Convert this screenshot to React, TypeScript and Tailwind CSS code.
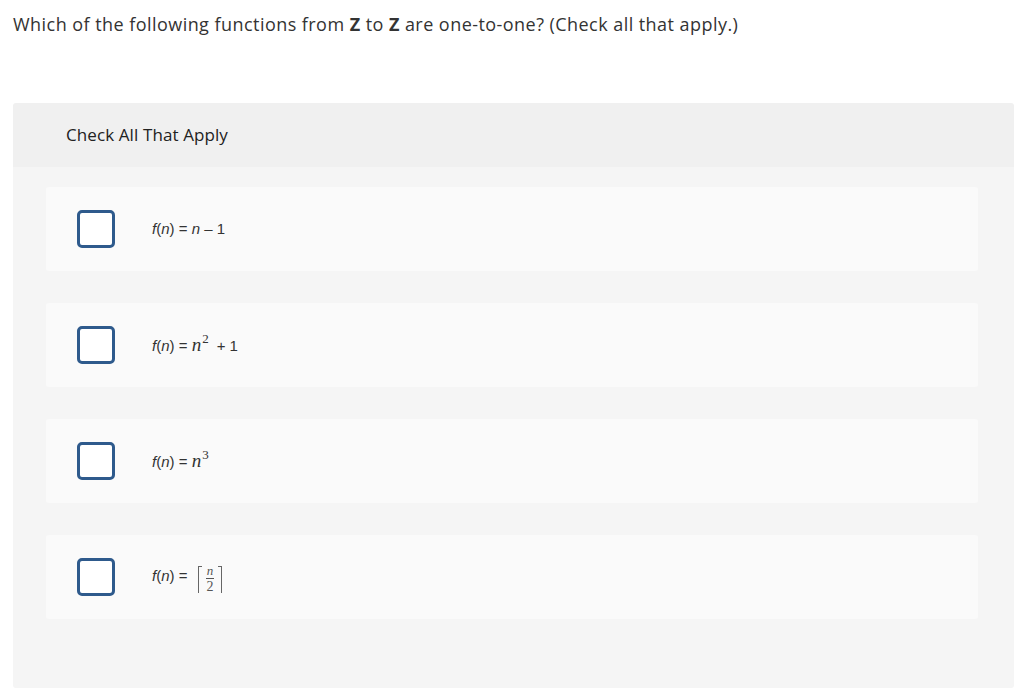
import type { ReactNode } from 'react';

const fn = (
  <>
    <span className="italic">f</span>(<span className="italic">n</span>) ={' '}
  </>
);

const serifN = <span className="font-['Liberation_Serif',serif] italic text-[19px]">n</span>;

const options: ReactNode[] = [
  <>
    {fn}
    <span className="italic">n</span> – 1
  </>,
  <>
    {fn}
    {serifN}
    <span className="font-['Liberation_Serif',serif] text-[13px] relative -top-[8px] ml-[1px]">2</span>
    <span className="ml-[8px]">+ 1</span>
  </>,
  <>
    {fn}
    {serifN}
    <span className="font-['Liberation_Serif',serif] text-[13px] relative -top-[8px] ml-[1px]">3</span>
  </>,
  <>
    {fn}
    <span className="ml-[6px] inline-flex items-center align-middle font-['Liberation_Serif',serif] text-[#555] relative top-[2px]">
      <span className="w-[4px] h-[27px] border-l-[1.5px] border-t-[1.5px] border-[#666]" />
      <span className="inline-flex flex-col items-center mx-[4px] leading-none">
        <span className="italic text-[13px] border-b border-[#555] px-[1px] pb-[1px]">n</span>
        <span className="text-[14px] pt-[1px]">2</span>
      </span>
      <span className="w-[4px] h-[27px] border-r-[1.5px] border-t-[1.5px] border-[#666]" />
    </span>
  </>,
];

export default function App() {
  return (
    <div className="min-h-[700px] bg-white font-['Open_Sans',sans-serif] text-[#333]">
      <p className="pt-[12px] pl-[13px] text-[18px] leading-[24px] tracking-[0.45px]">
        Which of the following functions from <b>Z</b> to <b>Z</b> are one-to-one? (Check all that apply.)
      </p>

      <div className="ml-[13px] mt-[67px] w-[1001px] rounded-[3px] overflow-hidden">
        <div className="h-[64px] bg-[#f0f0f0] pl-[53px] flex items-center text-[17px] tracking-[0.1px] text-[#222]">
          Check All That Apply
        </div>

        <div className="bg-[#f5f5f5] pt-[20px] pb-[69px] pl-[33px] flex flex-col gap-[32px]">
          {options.map((opt, i) => (
            <div key={i} className="w-[932px] h-[84px] rounded-[3px] bg-[#fafafa] flex items-center pl-[31px]">
              <div className="w-[38px] h-[38px] shrink-0 rounded-[5px] border-[3px] border-[#2e5a8c] bg-white" />
              <div className="ml-[37px] text-[15px] font-['Liberation_Sans',sans-serif] text-[#333] whitespace-pre">
                {opt}
              </div>
            </div>
          ))}
        </div>
      </div>
    </div>
  );
}
